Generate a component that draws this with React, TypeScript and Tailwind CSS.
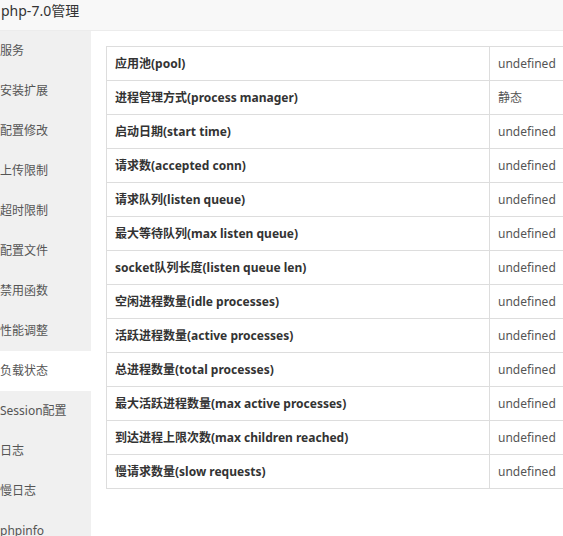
const menu = [
  '服务',
  '安装扩展',
  '配置修改',
  '上传限制',
  '超时限制',
  '配置文件',
  '禁用函数',
  '性能调整',
  '负载状态',
  'Session配置',
  '日志',
  '慢日志',
  'phpinfo',
];

const rows: [string, string][] = [
  ['应用池(pool)', 'undefined'],
  ['进程管理方式(process manager)', '静态'],
  ['启动日期(start time)', 'undefined'],
  ['请求数(accepted conn)', 'undefined'],
  ['请求队列(listen queue)', 'undefined'],
  ['最大等待队列(max listen queue)', 'undefined'],
  ['socket队列长度(listen queue len)', 'undefined'],
  ['空闲进程数量(idle processes)', 'undefined'],
  ['活跃进程数量(active processes)', 'undefined'],
  ['总进程数量(total processes)', 'undefined'],
  ['最大活跃进程数量(max active processes)', 'undefined'],
  ['到达进程上限次数(max children reached)', 'undefined'],
  ['慢请求数量(slow requests)', 'undefined'],
];

export default function App() {
  return (
    <div
      className="h-[536px] w-full overflow-hidden bg-white text-[#333]"
      style={{ fontFamily: '"Noto Sans", "Noto Sans CJK SC", sans-serif' }}
    >
      <div className="h-[31px] bg-[#f8f8f8] border-b border-[#ececec] pl-[1px] text-[14px] leading-[22px] text-[#333]">
        php-7.0管理
      </div>
      <div className="flex h-[505px]">
        <ul className="w-[91px] shrink-0 bg-[#f0f0f0]">
          {menu.map((item) => (
            <li
              key={item}
              className={
                'h-[40px] leading-[40px] text-[12px] text-[#555] whitespace-nowrap' +
                (item === '负载状态' ? ' bg-white' : '')
              }
            >
              {item}
            </li>
          ))}
        </ul>
        <div className="flex-1 pt-[15px] pl-[15px] overflow-hidden">
          <table className="w-[520px] border-collapse text-[12px]">
            <tbody>
              {rows.map(([k, v]) => (
                <tr key={k} className="h-[34px]">
                  <td className="w-[383px] border border-[#ddd] pl-[8px] font-bold text-[#333] whitespace-nowrap">
                    {k}
                  </td>
                  <td className="border border-[#ddd] pl-[8px] text-[#555] whitespace-nowrap">{v}</td>
                </tr>
              ))}
            </tbody>
          </table>
        </div>
      </div>
    </div>
  );
}
